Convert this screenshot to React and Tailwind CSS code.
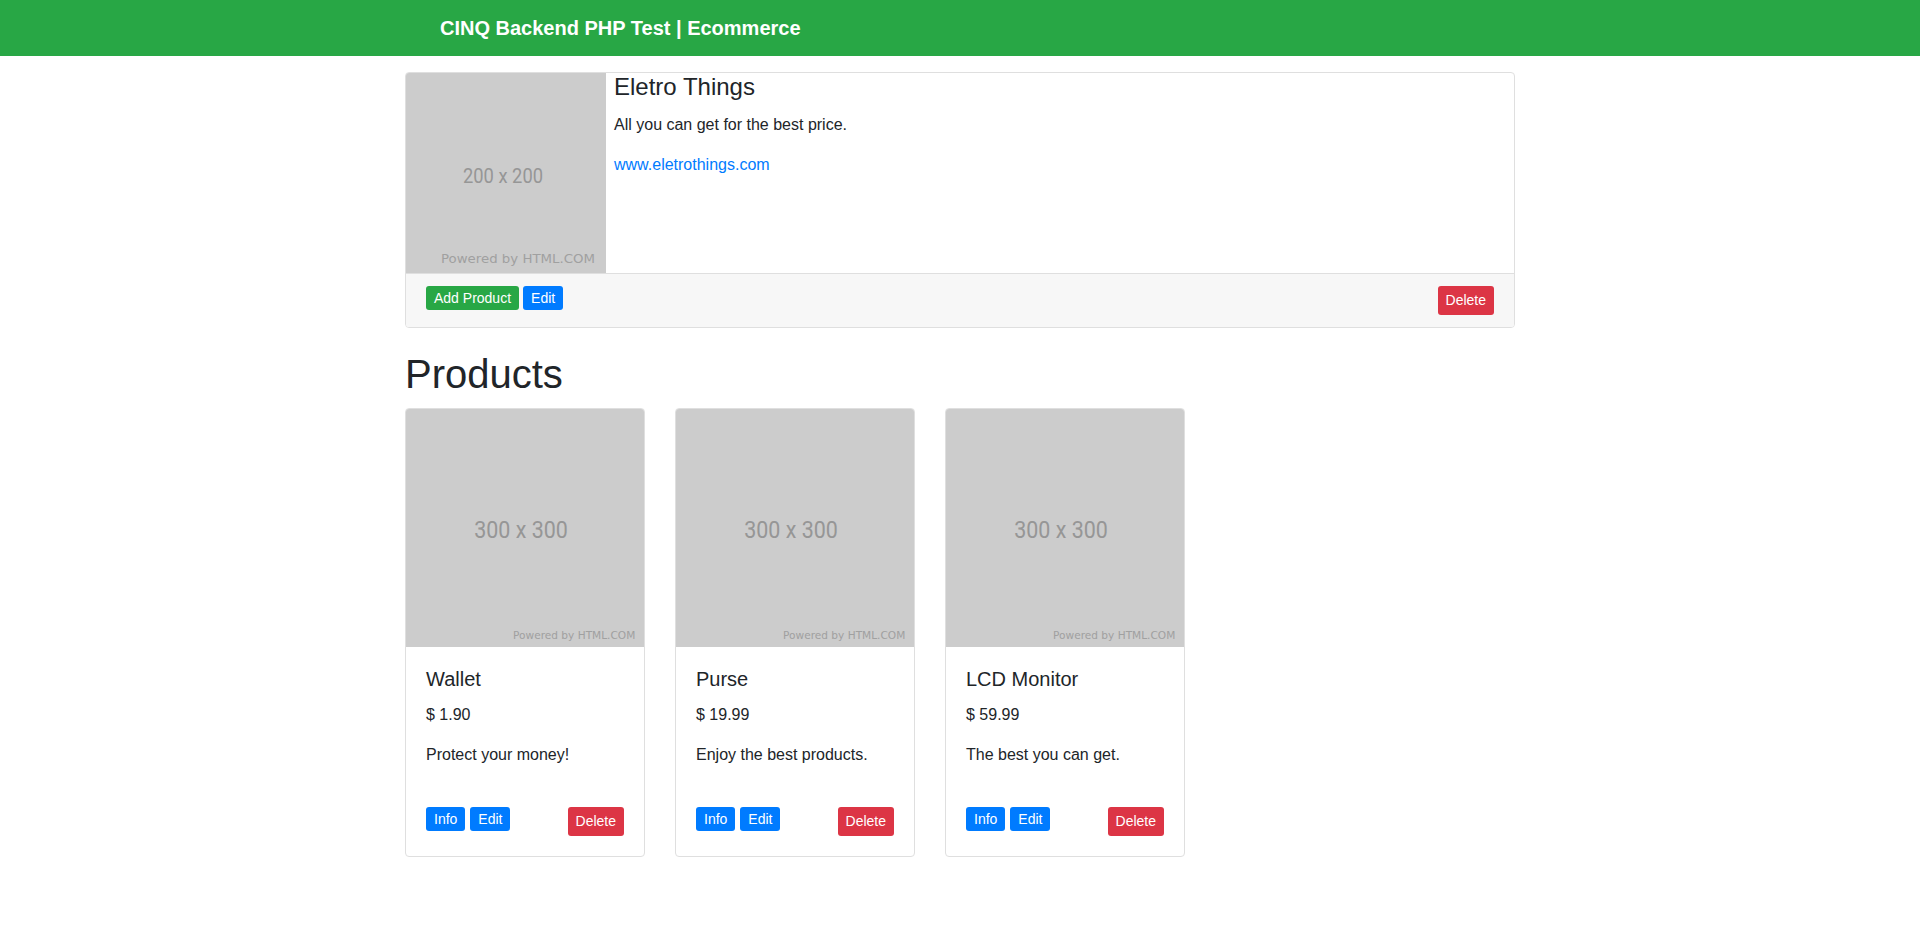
import React from "react";

const products = [
  { name: "Wallet", price: "1.90", description: "Protect your money!" },
  { name: "Purse", price: "19.99", description: "Enjoy the best products." },
  { name: "LCD Monitor", price: "59.99", description: "The best you can get." },
];

// placeholder picture (the html.com dummy image)
const Placeholder = ({ size, className }) => {
  const big = size === 300;
  return (
    <svg
      viewBox={`0 0 ${size} ${size}`}
      preserveAspectRatio="none"
      className={className}
    >
      <rect width={size} height={size} fill="#cccccc" />
      <text
        x={big ? 86 : 57}
        y={big ? 163 : 109.5}
        fontSize={big ? 31 : 21}
        fontFamily="Roboto, 'Liberation Sans', sans-serif"
        fill="#969696"
        textLength={big ? 118 : 80}
        lengthAdjust="spacingAndGlyphs"
      >
        {`${size} x ${size}`}
      </text>
      <text
        x={size - 165}
        y={size - 10}
        fontSize="12.7"
        fontFamily="'DejaVu Sans', Verdana, sans-serif"
        fill="#a0a0a0"
        textLength="154"
        lengthAdjust="spacingAndGlyphs"
      >
        Powered by HTML.COM
      </text>
    </svg>
  );
};

const Btn = ({ color, tall = false, children }) => (
  <button
    className={`${color} text-white text-sm px-2 py-1 rounded-[3px] ${
      tall ? "leading-[21px]" : "leading-4"
    }`}
  >
    {children}
  </button>
);

export default function App() {
  return (
    <div className="min-h-screen bg-white text-[#212529] font-['Liberation_Sans',Arial,sans-serif]">
      <nav className="h-14 bg-[#28a745] flex items-center">
        <div className="w-[1140px] mx-auto pl-[50px]">
          <span className="text-xl font-bold text-white">
            CINQ Backend PHP Test | Ecommerce
          </span>
        </div>
      </nav>

      <main className="w-[1140px] mx-auto px-[15px] pt-4 pb-10">
        {/* Store */}
        <div className="border border-[#dfdfdf] rounded overflow-hidden">
          <div className="flex">
            <Placeholder size={200} className="w-[200px] h-[200px] shrink-0 block" />
            <div className="pl-2">
              <h4 className="text-2xl leading-[1.2] mb-[11px]">Eletro Things</h4>
              <p className="leading-6 mb-4">All you can get for the best price.</p>
              <a href="#" className="leading-6 text-[#007bff]">
                www.eletrothings.com
              </a>
            </div>
          </div>
          <div className="bg-[#f7f7f7] border-t border-[#dfdfdf] px-5 py-3 flex justify-between items-start">
            <div className="flex gap-1">
              <Btn color="bg-[#28a745]">Add Product</Btn>
              <Btn color="bg-[#007bff]">Edit</Btn>
            </div>
            <Btn color="bg-[#dc3545]" tall>
              Delete
            </Btn>
          </div>
        </div>

        <h1 className="text-[40px] leading-[1.2] mt-[22px] mb-[10px]">Products</h1>

        <div className="flex gap-[30px]">
          {products.map((p) => (
            <div
              key={p.name}
              className="w-[240px] border border-[#dfdfdf] rounded overflow-hidden"
            >
              <Placeholder size={300} className="w-[238px] h-[238px] block" />
              <div className="p-5">
                <h5 className="text-xl leading-6 mb-3">{p.name}</h5>
                <p className="leading-6 mb-4">$ {p.price}</p>
                <p className="leading-6 mb-10">{p.description}</p>
                <div className="flex justify-between items-start">
                  <div className="flex gap-[5px]">
                    <Btn color="bg-[#007bff]">Info</Btn>
                    <Btn color="bg-[#007bff]">Edit</Btn>
                  </div>
                  <Btn color="bg-[#dc3545]" tall>
                    Delete
                  </Btn>
                </div>
              </div>
            </div>
          ))}
        </div>
      </main>
    </div>
  );
}
